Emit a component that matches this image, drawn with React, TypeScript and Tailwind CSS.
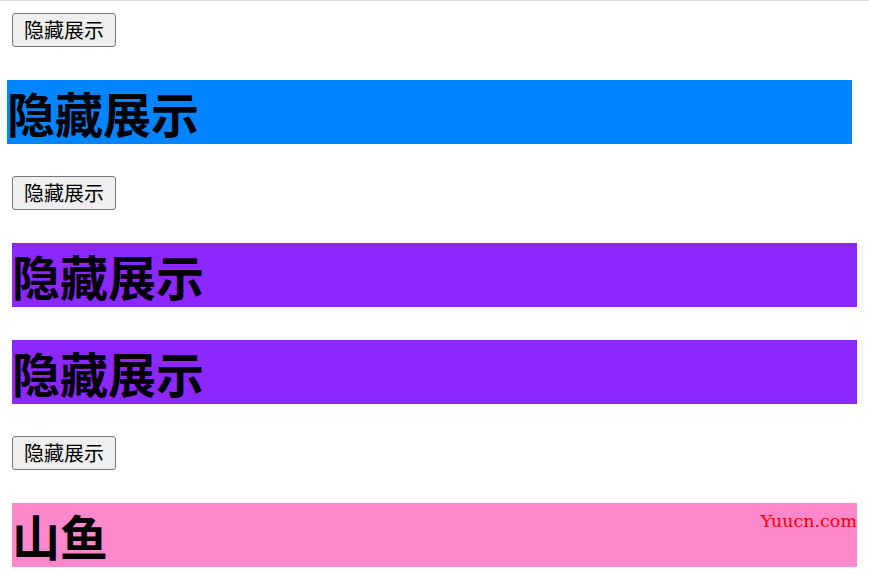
import React from 'react';

const cjk = { fontFamily: '"Noto Sans CJK SC", "Noto Sans", sans-serif' };

function ToggleButton() {
  return (
    <button
      className="w-[104px] h-[34px] shrink-0 self-start rounded-[3px] border border-[#767676] bg-[#efefef] text-[20px] leading-none text-black"
      style={cjk}
    >
      隐藏展示
    </button>
  );
}

function Title({ color, shift, children }: { color: string; shift?: boolean; children: React.ReactNode }) {
  return (
    <h1
      className={`h-[64px] text-[48px] leading-[64px] font-bold text-black ${color} ${shift ? '-translate-x-[5px]' : ''}`}
      style={cjk}
    >
      {children}
    </h1>
  );
}

export default function App() {
  return (
    <div className="min-h-[575px] w-full border-t border-[#dedede] bg-white">
      <div className="flex flex-col px-[12px] pt-[12px]">
        <ToggleButton />
        <div className="mt-[33px]">
          <Title color="bg-[#0084ff]" shift>隐藏展示</Title>
        </div>
        <div className="mt-[32px]">
          <ToggleButton />
        </div>
        <div className="mt-[33px]">
          <Title color="bg-[#8a28ff]">隐藏展示</Title>
        </div>
        <div className="mt-[33px]">
          <Title color="bg-[#8a28ff]">隐藏展示</Title>
        </div>
        <div className="mt-[32px]">
          <ToggleButton />
        </div>
        <div className="relative mt-[33px]">
          <Title color="bg-[#ff88cc]">山鱼</Title>
          <span
            className="absolute right-0 top-[6px] text-[17.5px] leading-[24px] text-[#ff0000]"
            style={{ fontFamily: '"DejaVu Serif", serif' }}
          >
            Yuucn.com
          </span>
        </div>
      </div>
    </div>
  );
}
